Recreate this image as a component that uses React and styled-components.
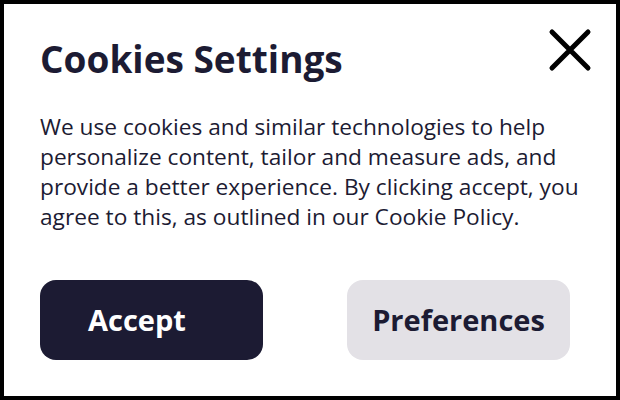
import React from "react";
import styled, { createGlobalStyle } from "styled-components";

const GlobalStyle = createGlobalStyle`
  html, body {
    margin: 0;
    padding: 0;
    background: #ffffff;
  }
  body {
    font-family: "Open Sans", "Liberation Sans", sans-serif;
  }
`;

const Dialog = styled.div`
  box-sizing: border-box;
  width: 620px;
  height: 400px;
  border: 4px solid #000000;
  background: #ffffff;
  padding: 22px 22px 36px 36px;
  display: flex;
  flex-direction: column;
`;

const Header = styled.div`
  display: flex;
  justify-content: space-between;
  align-items: flex-start;
`;

const Title = styled.h2`
  margin: 8px 0 0;
  font-size: 37px;
  font-weight: 700;
  line-height: 50px;
  color: #1c1b33;
`;

const CloseButton = styled.button`
  border: none;
  background: none;
  padding: 0;
  width: 48px;
  height: 48px;
  display: flex;
  align-items: center;
  justify-content: center;
  cursor: pointer;
`;

const Body = styled.p`
  margin: 28px 0 0;
  font-size: 22.7px;
  line-height: 30px;
  color: #1c1b33;
  width: 562px;
`;

const Actions = styled.div`
  margin-top: auto;
  display: flex;
  justify-content: space-between;
  padding-right: 24px;
`;

const Button = styled.button`
  box-sizing: border-box;
  width: 223px;
  height: 80px;
  border: none;
  border-radius: 16px;
  font-family: "Open Sans", "Liberation Sans", sans-serif;
  font-size: 29px;
  font-weight: 700;
  display: flex;
  align-items: center;
  justify-content: ${(p) => (p.$primary ? "flex-start" : "center")};
  padding: ${(p) => (p.$primary ? "0 0 2px 48px" : "0 0 2px")};
  background: ${(p) => (p.$primary ? "#1c1b33" : "#e3e1e6")};
  color: ${(p) => (p.$primary ? "#ffffff" : "#1c1b33")};
  cursor: pointer;
`;

export default function App() {
  return (
    <>
      <GlobalStyle />
      <Dialog>
        <Header>
          <Title>Cookies Settings</Title>
          <CloseButton aria-label="Close">
            <svg width="44" height="44" viewBox="0 0 44 44">
              <path
                d="M4 4 L40 40 M40 4 L4 40"
                stroke="#000000"
                strokeWidth="5"
                strokeLinecap="round"
              />
            </svg>
          </CloseButton>
        </Header>
        <Body>
          We use cookies and similar technologies to help personalize content,
          tailor and measure ads, and provide a better experience. By clicking
          accept, you agree to this, as outlined in our Cookie Policy.
        </Body>
        <Actions>
          <Button $primary>Accept</Button>
          <Button>Preferences</Button>
        </Actions>
      </Dialog>
    </>
  );
}
